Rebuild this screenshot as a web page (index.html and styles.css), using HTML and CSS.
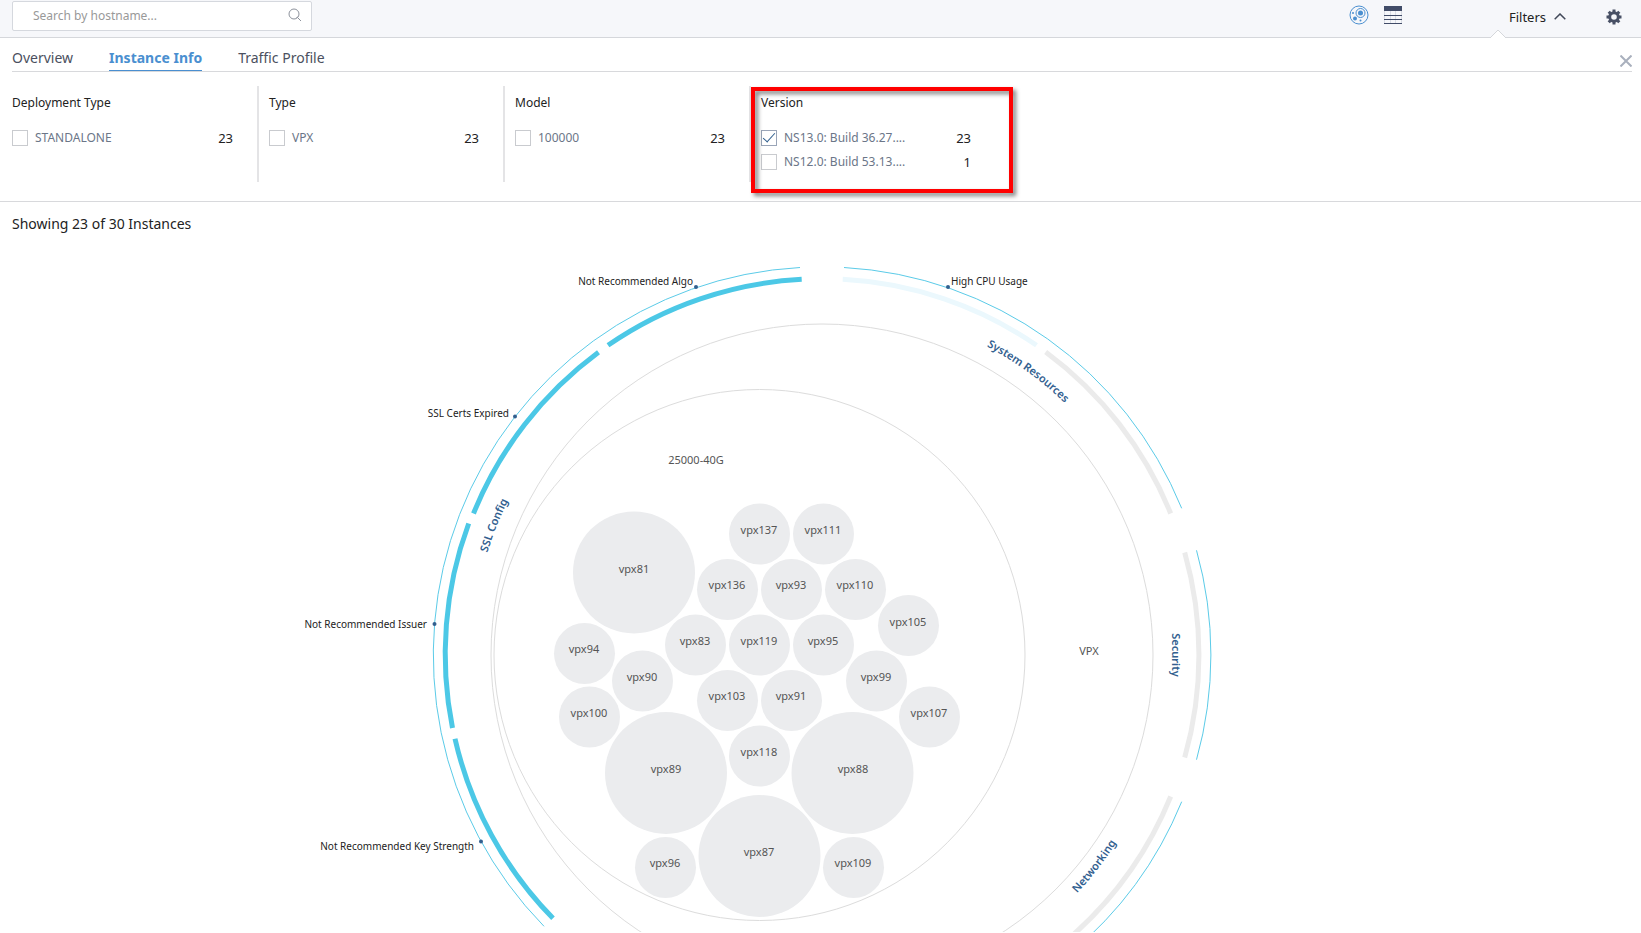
FILE: index.html
```html
<!DOCTYPE html>
<html lang="en">
<head>
<meta charset="utf-8">
<title>Infrastructure Analytics</title>
<link rel="stylesheet" href="styles.css">
</head>
<body>
<header class="toolbar">
  <div class="search">
    <input class="search-input" type="text" placeholder="Search by hostname..." aria-label="Search by hostname">
    <svg class="search-icon" viewBox="0 0 14 14" aria-hidden="true"><circle cx="6" cy="6" r="5"/><path d="M8.500 10l1.500-1.500M9.500 9.500L13 13"/></svg>
  </div>
  <div class="views">
    <button class="icon-button" type="button" aria-label="Circle pack view">
      <svg width="20" height="20" viewBox="0 0 20 20" class="pack-icon"><circle cx="10" cy="10" r="9"/><circle cx="11.500" cy="8" r="4.500"/><circle class="dot" cx="11.500" cy="8" r="2.500"/><circle class="dot" cx="6" cy="13.500" r="2"/><circle class="dot" cx="4" cy="8" r="1"/><circle class="dot" cx="11.500" cy="15.500" r="1"/></svg>
    </button>
    <button class="icon-button" type="button" aria-label="Table view">
      <svg width="18" height="18" viewBox="0 0 18 18" class="table-icon"><path class="cols" d="M.5 5v13M6.500 5v13M11.500 5v13M17.500 5v13"/><path class="head" d="M0 0h18v5H0z"/><path class="rows" d="M0 9.500h18M0 13.500h18M0 17.500h18"/></svg>
    </button>
  </div>
  <button class="filters-button" type="button">Filters
    <svg width="12" height="7" viewBox="0 0 12 7" aria-hidden="true"><path d="M.7 6.300L6 1l5.300 5.300"/></svg>
  </button>
  <button class="icon-button" type="button" aria-label="Settings">
    <svg width="16" height="16" viewBox="0 0 16 16" class="gear-icon"><circle cx="8" cy="8" r="4.300"/><path d="M8 .5v3M8 12.500v3M.5 8h3M12.500 8h3M2.700 2.700l2.100 2.100M11.200 11.200l2.100 2.100M2.700 13.300l2.100-2.100M11.200 4.800l2.100-2.100"/></svg>
  </button>
  <svg class="pointer" width="14" height="9" viewBox="0 0 14 9" aria-hidden="true"><path d="M0 8L7 1l7 7v1H0z" class="pointer-fill"/><path d="M0 8L7 1l7 7" class="pointer-line"/></svg>
</header>
<section class="filters">
  <div class="tab-row">
    <nav class="tabs">
      <a class="tab" href="#overview">Overview</a>
      <a class="tab active" href="#instance">Instance Info</a>
      <a class="tab" href="#traffic">Traffic Profile</a>
    </nav>
    <button class="icon-button close" type="button" aria-label="Close filters">
      <svg width="12" height="12" viewBox="0 0 12 12"><path d="M.5.5l11 11M11.500.5l-11 11"/></svg>
    </button>
  </div>
  <div class="facets">
    <fieldset class="facet">
      <legend>Deployment Type</legend>
      <label class="option"><input type="checkbox"><span class="name">STANDALONE</span><span class="count">23</span></label>
    </fieldset>
    <fieldset class="facet">
      <legend>Type</legend>
      <label class="option"><input type="checkbox"><span class="name">VPX</span><span class="count">23</span></label>
    </fieldset>
    <fieldset class="facet">
      <legend>Model</legend>
      <label class="option"><input type="checkbox"><span class="name">100000</span><span class="count">23</span></label>
    </fieldset>
    <fieldset class="facet marked">
      <legend>Version</legend>
      <label class="option"><input type="checkbox" checked><span class="name">NS13.0: Build 36.27....</span><span class="count">23</span></label>
      <label class="option"><input type="checkbox"><span class="name">NS12.0: Build 53.13....</span><span class="count">1</span></label>
    </fieldset>
  </div>
</section>
<main class="results">
  <p class="summary">Showing 23 of 30 Instances</p>
  <svg class="chart" viewBox="0 240 1641 693" role="img" aria-label="Instances by model with issue categories">
    <defs>
      <path id="label-arc-top" d="M472 656A350 350 0 0 1 1172 656"/>
      <path id="label-arc-bottom" d="M822 1005A349 349 0 0 0 1171 656"/>
    </defs>
    <g class="ring">
      <circle cx="822" cy="656" r="331"/>
      <circle cx="759.500" cy="656" r="265.500"/>
    </g>
    <g class="outline">
      <path d="M544 927.300A388 388 0 0 1 800 268.500"/>
      <path d="M844 268.500A388 388 0 0 1 1181.700 509.300"/>
      <path d="M1196.500 551.300A388 388 0 0 1 1196.500 760.700"/>
      <path d="M1181.700 802.700A388 388 0 0 1 1070 954.500"/>
    </g>
    <g class="band critical">
      <path d="M608 346.300A376 376 0 0 1 801.700 280.300"/>
      <path d="M473.500 514.500A376 376 0 0 1 598.500 353.300"/>
      <path d="M452.500 729A376 376 0 0 1 468.700 524.500"/>
      <path d="M553 919.300A376 376 0 0 1 455 739.700"/>
    </g>
    <path class="band low" d="M842.700 280.300A376 376 0 0 1 1036.500 346.300"/>
    <g class="band none">
      <path d="M1045.700 353A376 376 0 0 1 1170.700 514.500"/>
      <path d="M1184.700 553.500A376 376 0 0 1 1184.700 758.500"/>
      <path d="M1170.700 797.500A376 376 0 0 1 1060 947"/>
    </g>
    <g class="category">
      <text><textPath href="#label-arc-top" startOffset="12%">SSL Config</textPath></text>
      <text><textPath href="#label-arc-top" startOffset="70%">System Resources</textPath></text>
      <text transform="translate(1172 656) rotate(90)">Security</text>
      <text><textPath href="#label-arc-bottom" startOffset="58%">Networking</textPath></text>
    </g>
    <g class="marker">
      <circle cx="696" cy="288" r="2"/><circle cx="515" cy="417.500" r="2"/><circle cx="434.500" cy="625" r="2"/><circle cx="481" cy="842.500" r="2"/><circle cx="948" cy="288" r="2"/>
    </g>
    <g class="issue">
      <text x="693" y="286" class="end">Not Recommended Algo</text>
      <text x="509" y="418" class="end">SSL Certs Expired</text>
      <text x="427" y="629" class="end">Not Recommended Issuer</text>
      <text x="474" y="851" class="end">Not Recommended Key Strength</text>
      <text x="951" y="286">High CPU Usage</text>
    </g>
    <g class="bubble">
      <circle cx="634" cy="573.500" r="61"/><circle cx="666" cy="774" r="61"/><circle cx="852.500" cy="774" r="61"/><circle cx="759.500" cy="857" r="61"/>
      <circle cx="759.500" cy="535" r="30.500"/><circle cx="823.500" cy="535" r="30.500"/><circle cx="727.500" cy="590.500" r="30.500"/><circle cx="791.500" cy="590.500" r="30.500"/><circle cx="855.500" cy="590.500" r="30.500"/>
      <circle cx="908.500" cy="626.500" r="30.500"/><circle cx="695.500" cy="646" r="30.500"/><circle cx="759.500" cy="646" r="30.500"/><circle cx="823.500" cy="646" r="30.500"/><circle cx="876.500" cy="682" r="30.500"/>
      <circle cx="929.500" cy="718" r="30.500"/><circle cx="727.500" cy="701.500" r="30.500"/><circle cx="791.500" cy="701.500" r="30.500"/><circle cx="759.500" cy="757" r="30.500"/><circle cx="584.500" cy="654.500" r="30.500"/>
      <circle cx="642.500" cy="682" r="30.500"/><circle cx="589.500" cy="718" r="30.500"/><circle cx="665.500" cy="868.500" r="30.500"/><circle cx="853.500" cy="868.500" r="30.500"/>
    </g>
    <g class="node">
      <text x="696" y="465">25000-40G</text><text x="1089" y="656">VPX</text>
      <text x="634" y="574">vpx81</text><text x="666" y="774">vpx89</text><text x="853" y="774">vpx88</text><text x="759" y="857">vpx87</text>
      <text x="759" y="535">vpx137</text><text x="823" y="535">vpx111</text><text x="727" y="590">vpx136</text><text x="791" y="590">vpx93</text><text x="855" y="590">vpx110</text>
      <text x="908" y="627">vpx105</text><text x="695" y="646">vpx83</text><text x="759" y="646">vpx119</text><text x="823" y="646">vpx95</text><text x="876" y="682">vpx99</text>
      <text x="929" y="718">vpx107</text><text x="727" y="701">vpx103</text><text x="791" y="701">vpx91</text><text x="759" y="757">vpx118</text><text x="584" y="654">vpx94</text>
      <text x="642" y="682">vpx90</text><text x="589" y="718">vpx100</text><text x="665" y="868">vpx96</text><text x="853" y="868">vpx109</text>
    </g>
  </svg>
</main>
</body>
</html>
```
FILE: styles.css
```css
*, *::before, *::after { box-sizing: border-box; }

body {
  margin: 0;
  background: #fff;
  color: #222;
  font-family: "Noto Sans", "Open Sans", sans-serif;
  font-size: 14px;
  line-height: 20px;
}

button, input { font: inherit; color: inherit; }
button { display: inline-flex; align-items: center; padding: 0; border: 0; background: none; }

.toolbar {
  position: relative;
  display: flex;
  align-items: center;
  height: 38px;
  padding: 0 19px 6px 12px;
  background: #f6f7fa;
  border-bottom: 1px solid #d5d7db;
}

.search { position: relative; width: 300px; }
.search-input {
  display: block;
  width: 100%;
  height: 30px;
  padding: 0 40px 0 20px;
  border: 1px solid #d5d8de;
  border-radius: 2px;
  background: #fff;
  font-size: 12px;
}
.search-input::placeholder { color: #999; opacity: 1; }
.search-icon { position: absolute; right: 10px; top: 7px; width: 14px; height: 14px; fill: none; stroke: #8d929c; }

.views { display: flex; align-items: center; gap: 15px; margin-left: auto; margin-right: 107px; padding-bottom: 2px; }
.pack-icon { fill: none; stroke: #4a8fd0; }
.pack-icon .dot { fill: #4a8fd0; stroke: none; }
.table-icon .head { fill: #414c68; }
.table-icon .rows { fill: none; stroke: #414c68; }
.table-icon .cols { fill: none; stroke: #d9dce4; }

.filters-button { gap: 8px; margin-right: 40px; padding-top: 2px; font-size: 13px; }
.filters-button svg { fill: none; stroke: #414858; stroke-width: 1.5; }
.gear-icon { fill: none; stroke: #485065; stroke-width: 3; }
.toolbar > .icon-button { padding-top: 2px; }

.pointer { position: absolute; right: 136px; bottom: -1px; }
.pointer-fill { fill: #fff; }
.pointer-line { fill: none; stroke: #d5d7db; }

.filters { padding: 12px 9px 19px 12px; border-bottom: 1px solid #d8d9dc; }
.tab-row { display: flex; justify-content: space-between; border-bottom: 1px solid #d8d9dc; height: 22px; }
.tabs { display: flex; gap: 36px; }
.tab { height: 21px; line-height: 16px; color: #4b5060; text-decoration: none; }
.tab.active { color: #4a8fd0; font-weight: 700; border-bottom: 1px solid #4a8fd0; }
.close { align-self: flex-start; padding-top: 5px; }
.close svg { fill: none; stroke: #a9b0bd; stroke-width: 2; }

.facets { display: flex; padding-top: 14px; }
.facet {
  width: 246px;
  min-height: 96px;
  margin: 0;
  padding: 7px 24px 0 10px;
  border: 0;
  border-right: 2px solid #e4e4e6;
}
.facet:first-child { width: 247px; padding-left: 0; }
.facet legend { float: left; width: 100%; padding: 0; margin-bottom: 13px; font-size: 12px; }
.option { display: flex; align-items: center; height: 24px; clear: both; }
.option input {
  appearance: none;
  position: relative;
  width: 16px;
  height: 16px;
  margin: 0 7px 0 0;
  border: 1px solid #c9cbcf;
  background: #fff;
}
.option input:checked { border-color: #9aa5b8; }
.option input:checked::before {
  content: "";
  position: absolute;
  left: 1px;
  top: 2px;
  width: 12px;
  height: 6px;
  border: solid #32608f;
  border-width: 0 0 1px 1px;
  transform: rotate(-48deg);
}
.name { color: #6b7688; font-size: 12px; }
.count { margin-left: auto; font-size: 13px; }
.marked { position: relative; border-right: 0; padding-right: 26px; }
.marked::after {
  content: "";
  position: absolute;
  left: 0;
  top: 1px;
  width: 262px;
  height: 106px;
  border: 4px solid #f00;
  filter: drop-shadow(3px 3px 2px rgba(0, 0, 0, .5));
  pointer-events: none;
}

.summary { margin: 0; padding: 12px 12px 5px; }
.chart { display: block; width: 100%; height: auto; }
.ring { fill: none; stroke: #dcdcdc; stroke-width: 1; }
.outline { fill: none; stroke: #5bcbe8; stroke-width: 1; }
.band { fill: none; stroke-width: 5; }
.critical { stroke: #4cc8e6; }
.low { stroke: #ebf8fd; }
.none { stroke: #ebebeb; }
.category { fill: #32608f; font-size: 11px; font-weight: 600; }
.category text { text-anchor: middle; }
.marker { fill: #32608f; }
.issue { fill: #222; font-size: 10px; }
.issue .end { text-anchor: end; }
.bubble { fill: #ebecee; }
.node { fill: #555; font-size: 11px; text-anchor: middle; }
```
